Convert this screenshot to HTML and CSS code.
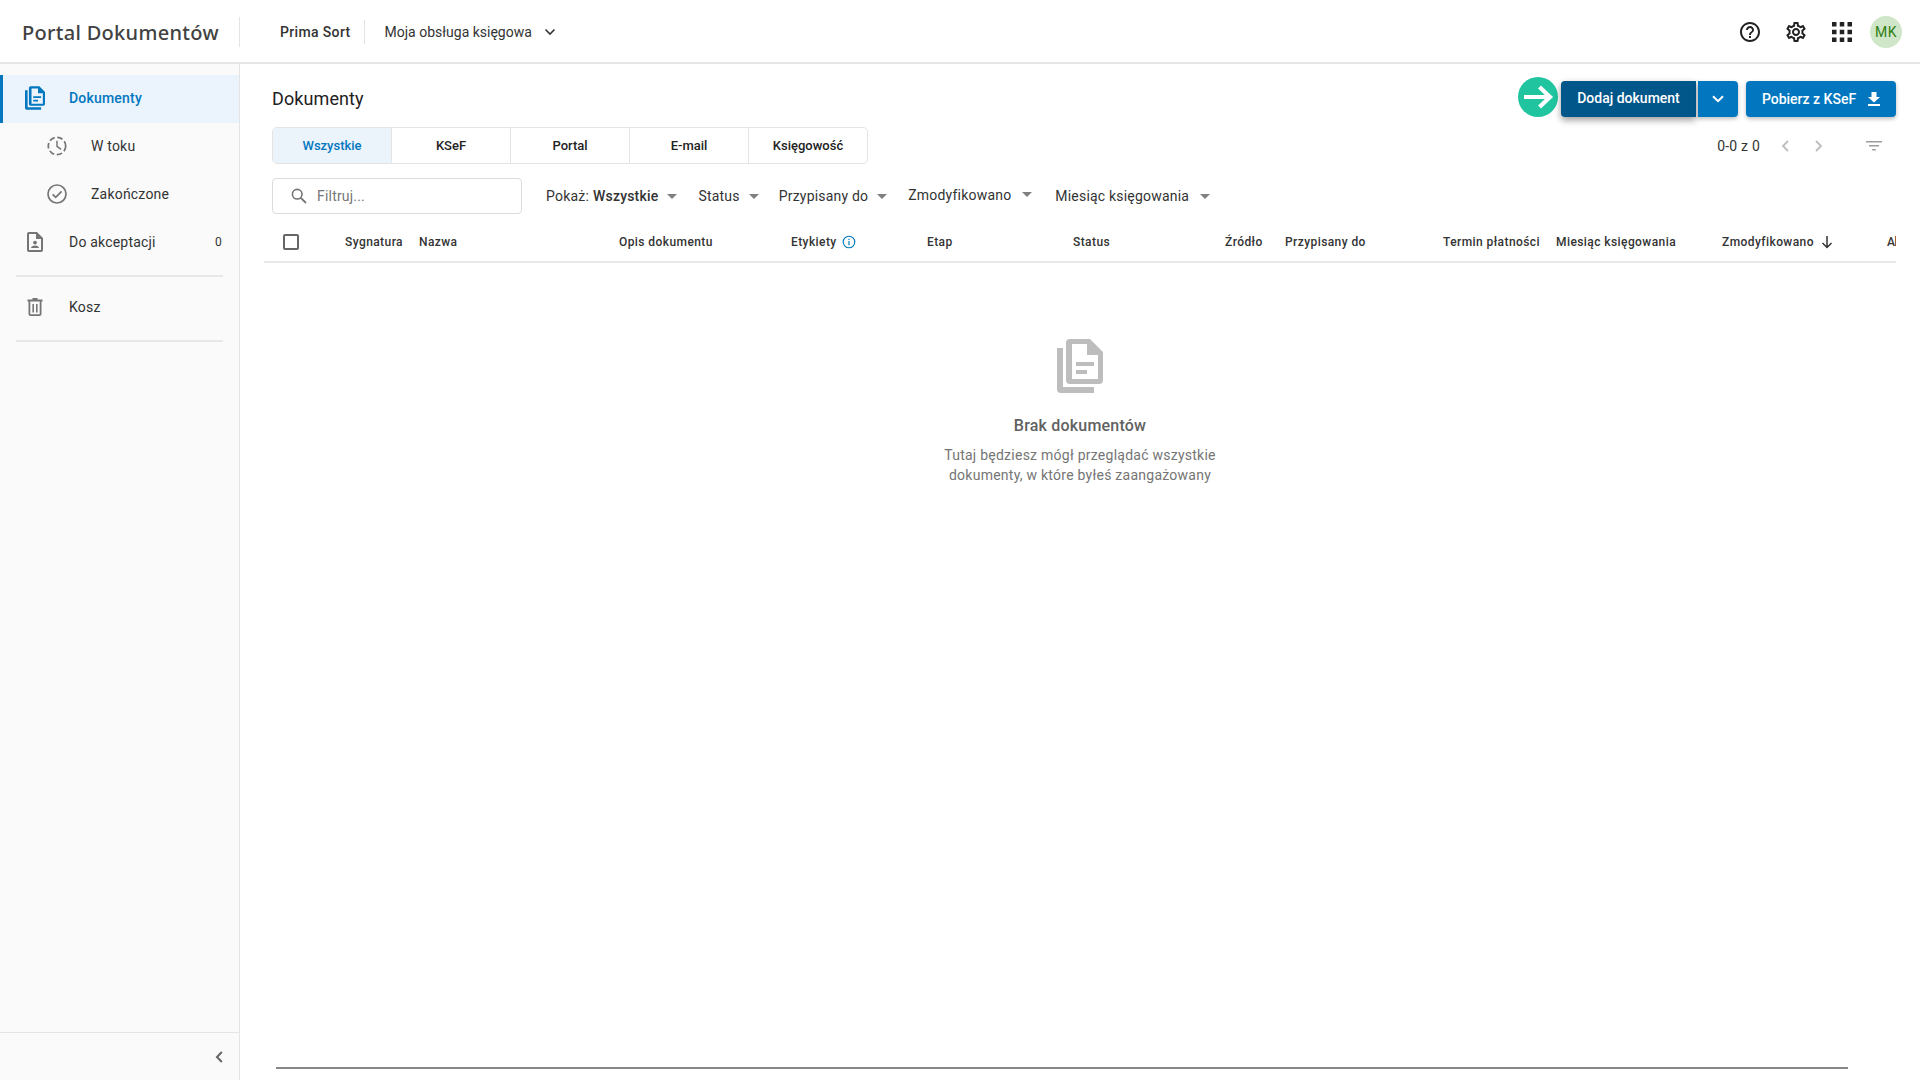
FILE: index.html
```html
<!DOCTYPE html>
<html lang="pl">
<head>
    <meta charset="UTF-8">
    <meta name="viewport" content="width=device-width, initial-scale=1.0">
    <title>Portal Dokumentów</title>
    <link rel="stylesheet" href="styles.css">
</head>
<body>
    <svg class="defs" width="0" height="0">
        <symbol id="doc-icon" viewBox="0 0 46 54">
            <path d="M0 9h6v39h31v6H4a4 4 0 0 1-4-4z"/>
            <path fill-rule="evenodd" d="M13 0h20l13 13v28a4 4 0 0 1-4 4H13a4 4 0 0 1-4-4V4a4 4 0 0 1 4-4zm2 5v35h26V16H30V5z"/>
            <path d="M19 23h18v4H19zM19 31h11v4H19z"/>
        </symbol>
    </svg>

    <header class="top-bar">
        <div class="logo">Portal Dokumentów</div>
        <div class="company">Prima Sort</div>
        <div class="service">
            Moja obsługa księgowa
            <svg class="service-chevron" viewBox="0 0 12 8"><path d="M1.5 1.5 6 6l4.5-4.5" fill="none" stroke="#333" stroke-width="1.6"/></svg>
        </div>
        <div class="top-icons">
            <svg class="top-icon" viewBox="0 0 24 24"><path d="M11 18h2v-2h-2v2zm1-16C6.48 2 2 6.48 2 12s4.48 10 10 10 10-4.48 10-10S17.52 2 12 2zm0 18c-4.41 0-8-3.59-8-8s3.59-8 8-8 8 3.59 8 8-3.59 8-8 8zm0-14c-2.21 0-4 1.79-4 4h2c0-1.1.9-2 2-2s2 .9 2 2c0 2-3 1.75-3 5h2c0-2.25 3-2.5 3-5 0-2.21-1.79-4-4-4z"/></svg>
            <svg class="top-icon" viewBox="0 0 24 24"><path d="M19.43 12.98c.04-.32.07-.64.07-.98 0-.34-.03-.66-.07-.98l2.11-1.65c.19-.15.24-.42.12-.64l-2-3.46c-.09-.16-.26-.25-.44-.25-.06 0-.12.01-.17.03l-2.49 1c-.52-.4-1.08-.73-1.69-.98l-.38-2.65C14.46 2.18 14.25 2 14 2h-4c-.25 0-.46.18-.49.42l-.38 2.65c-.61.25-1.17.59-1.69.98l-2.49-1c-.06-.02-.12-.03-.18-.03-.17 0-.34.09-.43.25l-2 3.46c-.13.22-.07.49.12.64l2.11 1.65c-.04.32-.07.65-.07.98 0 .33.03.66.07.98l-2.11 1.65c-.19.15-.24.42-.12.64l2 3.46c.09.16.26.25.44.25.06 0 .12-.01.17-.03l2.49-1c.52.4 1.08.73 1.69.98l.38 2.65c.03.24.24.42.49.42h4c.25 0 .46-.18.49-.42l.38-2.65c.61-.25 1.17-.59 1.69-.98l2.49 1c.06.02.12.03.18.03.17 0 .34-.09.43-.25l2-3.46c.12-.22.07-.49-.12-.64l-2.11-1.65zm-1.98-1.71c.04.31.05.52.05.73 0 .21-.02.43-.05.73l-.14 1.13.89.7 1.08.84-.7 1.21-1.27-.51-1.04-.42-.9.68c-.43.32-.84.56-1.25.73l-1.06.43-.16 1.13-.2 1.35h-1.4l-.19-1.35-.16-1.13-1.06-.43c-.43-.18-.83-.41-1.23-.71l-.91-.7-1.06.43-1.27.51-.7-1.21 1.08-.84.89-.7-.14-1.13c-.03-.31-.05-.54-.05-.74s.02-.43.05-.73l.14-1.13-.89-.7-1.08-.84.7-1.21 1.27.51 1.04.42.9-.68c.43-.32.84-.56 1.25-.73l1.06-.43.16-1.13.2-1.35h1.39l.19 1.35.16 1.13 1.06.43c.43.18.83.41 1.23.71l.91.7 1.06-.43 1.27-.51.7 1.21-1.07.85-.89.7.14 1.13zM12 8c-2.21 0-4 1.79-4 4s1.79 4 4 4 4-1.79 4-4-1.79-4-4-4zm0 6c-1.1 0-2-.9-2-2s.9-2 2-2 2 .9 2 2-.9 2-2 2z"/></svg>
            <svg class="top-icon" viewBox="0 0 24 24"><path d="M2 2h4.5v4.5H2zM9.75 2h4.5v4.5h-4.5zM17.5 2H22v4.5h-4.5zM2 9.75h4.5v4.5H2zM9.75 9.75h4.5v4.5h-4.5zM17.5 9.75H22v4.5h-4.5zM2 17.5h4.5V22H2zM9.75 17.5h4.5V22h-4.5zM17.5 17.5H22V22h-4.5z"/></svg>
            <div class="avatar">MK</div>
        </div>
    </header>

    <div class="layout">
        <aside class="sidebar">
            <nav class="side-nav">
                <a class="side-item active">
                    <svg class="side-icon doc"><use href="#doc-icon"/></svg>
                    Dokumenty
                </a>
                <a class="side-item sub">
                    <svg class="side-icon" viewBox="0 0 20 20"><circle cx="10" cy="10" r="8.7" fill="none" stroke="#757575" stroke-width="1.7" stroke-dasharray="5.6 2.6"/><path d="M10 4.8v5.6l4 3" fill="none" stroke="#757575" stroke-width="1.5"/></svg>
                    W toku
                </a>
                <a class="side-item sub">
                    <svg class="side-icon" viewBox="0 0 20 20"><circle cx="10" cy="10" r="9" fill="none" stroke="#757575" stroke-width="1.7"/><path d="m5.6 10.3 3.1 3.1 5.9-6" fill="none" stroke="#757575" stroke-width="1.7"/></svg>
                    Zakończone
                </a>
                <a class="side-item">
                    <svg class="side-icon narrow" viewBox="0 0 16 20"><path fill="#757575" fill-rule="evenodd" d="M2 0h8l6 6v12a2 2 0 0 1-2 2H2a2 2 0 0 1-2-2V2a2 2 0 0 1 2-2zm0 2v16h12V7H9V2z"/><circle cx="8" cy="10.6" r="1.9" fill="#757575"/><path fill="#757575" d="M4 16c0-1.7 2-2.6 4-2.6s4 .9 4 2.6z"/></svg>
                    Do akceptacji
                    <span class="side-count">0</span>
                </a>
                <div class="side-divider"></div>
                <a class="side-item trash">
                    <svg class="side-icon narrow" viewBox="0 0 16 18"><path fill="#757575" fill-rule="evenodd" d="M5.500 0h5v1.500h5v2H.5v-2h5zM1.500 3.500h13V16a2 2 0 0 1-2 2h-9a2 2 0 0 1-2-2zm1.800 2V16.200h9.400V3.500H3.300zM5.400 6h1.600v8.500H5.400zm3.600 0h1.600v8.500H9z"/></svg>
                    Kosz
                </a>
                <div class="side-divider"></div>
            </nav>
            <div class="side-footer">
                <svg class="collapse-icon" viewBox="0 0 8 12"><path d="M6.8 1 2 6l4.8 5" fill="none" stroke="#666" stroke-width="2"/></svg>
            </div>
        </aside>

        <main class="content">
            <div class="title-row">
                <h1 class="page-title">Dokumenty</h1>
                <div class="actions">
                    <div class="hint-arrow">
                        <svg viewBox="0 0 40 40"><path d="M6 20h26M21.500 10l10.500 10-10.500 10" fill="none" stroke="#fff" stroke-width="4.200"/></svg>
                    </div>
                    <button class="btn btn-main">Dodaj dokument</button>
                    <button class="btn btn-split">
                        <svg viewBox="0 0 12 8" width="12" height="8"><path d="M1 1.200 6 6.200l5-5" fill="none" stroke="#fff" stroke-width="2"/></svg>
                    </button>
                    <button class="btn btn-ksef">
                        Pobierz z KSeF
                        <svg viewBox="0 0 12 14" width="12" height="14"><path fill="#fff" d="M3.500 0h5v5H12L6 10.500 0 5h3.500zM0 12h12v2H0z"/></svg>
                    </button>
                </div>
            </div>

            <div class="tabs-row">
                <div class="tabs">
                    <div class="tab active">Wszystkie</div>
                    <div class="tab">KSeF</div>
                    <div class="tab">Portal</div>
                    <div class="tab">E-mail</div>
                    <div class="tab">Księgowość</div>
                </div>
                <div class="pager">
                    <span class="pager-text">0-0 z 0</span>
                    <svg class="pager-arrow" viewBox="0 0 8 12"><path d="M7 1 2 6l5 5" fill="none" stroke="#bdbdbd" stroke-width="1.800"/></svg>
                    <svg class="pager-arrow" viewBox="0 0 8 12"><path d="m1 1 5 5-5 5" fill="none" stroke="#bdbdbd" stroke-width="1.800"/></svg>
                    <svg class="list-filter" viewBox="0 0 16 10"><path fill="#9e9e9e" d="M0 0h16v1.500H0zM3 4h10v1.500H3zM6.200 8h3.600v1.500H6.200z"/></svg>
                </div>
            </div>

            <div class="filter-row">
                <div class="search">
                    <svg class="search-icon" viewBox="0 0 16 16"><circle cx="6.200" cy="6.200" r="4.800" fill="none" stroke="#757575" stroke-width="1.600"/><path d="m9.800 9.800 5.200 5.200" stroke="#757575" stroke-width="1.800"/></svg>
                    <span class="search-text">Filtruj...</span>
                </div>
                <div class="filter filter-show">Pokaż: <b>Wszystkie</b><i class="caret"></i></div>
                <div class="filter filter-status">Status<i class="caret"></i></div>
                <div class="filter filter-assigned">Przypisany do<i class="caret"></i></div>
                <div class="filter filter-modified">Zmodyfikowano<i class="caret"></i></div>
                <div class="filter filter-month">Miesiąc księgowania<i class="caret"></i></div>
            </div>

            <div class="table-head">
                <div class="head-check"><span class="checkbox"></span></div>
                <div>Sygnatura</div>
                <div>Nazwa</div>
                <div>Opis dokumentu</div>
                <div class="head-labels">Etykiety
                    <svg viewBox="0 0 14 14" width="14" height="14"><circle cx="7" cy="7" r="5.800" fill="none" stroke="#0277c0" stroke-width="1.100"/><path d="M6.400 6h1.200v4.300H6.400zM6.400 3.700h1.200V5H6.400z" fill="#0277c0"/></svg>
                </div>
                <div>Etap</div>
                <div>Status</div>
                <div>Źródło</div>
                <div>Przypisany do</div>
                <div>Termin płatności</div>
                <div>Miesiąc księgowania</div>
                <div class="head-sorted">Zmodyfikowano
                    <svg viewBox="0 0 12 14" width="12" height="14"><path d="M6 1v11.500M1.500 8 6 12.500 10.500 8" fill="none" stroke="#333" stroke-width="1.500"/></svg>
                </div>
                <div class="head-cut">Akcje</div>
            </div>

            <div class="empty">
                <svg class="empty-icon"><use href="#doc-icon"/></svg>
                <h2 class="empty-title">Brak dokumentów</h2>
                <p class="empty-text">Tutaj będziesz mógł przeglądać wszystkie<br>dokumenty, w które byłeś zaangażowany</p>
            </div>

            <div class="scroll-line"></div>
        </main>
    </div>
</body>
</html>
```

FILE: styles.css
```css
* {
    box-sizing: border-box;
}
html, body {
    height: 100%;
}
body {
    margin: 0;
    display: flex;
    flex-direction: column;
    overflow: hidden;
    background-color: white;
    color: #333;
    font-family: Roboto, "Liberation Sans", sans-serif;
    font-size: 14px;
    letter-spacing: 0.2px;
}
.defs {
    position: absolute;
}

/* top bar */
.top-bar {
    height: 64px;
    flex-shrink: 0;
    display: flex;
    align-items: center;
    border-bottom: 2px solid #e6e6e6;
    padding-top: 1px;
}
.logo {
    width: 240px;
    height: 30px;
    padding-left: 22px;
    border-right: 1px solid #e4e4e4;
    font-family: "Noto Sans", sans-serif;
    font-size: 20px;
    font-weight: 500;
    line-height: 31px;
    letter-spacing: 0.3px;
    color: #424242;
    white-space: nowrap;
}
.company {
    margin-left: 40px;
    padding-right: 13px;
    height: 24px;
    line-height: 24px;
    border-right: 1px solid #e4e4e4;
    font-weight: 500;
    letter-spacing: 0.35px;
}
.service {
    margin-left: 20px;
    display: flex;
    align-items: center;
    gap: 12px;
    letter-spacing: 0;
}
.service-chevron {
    width: 12px;
    height: 8px;
}
.top-icons {
    margin-left: auto;
    margin-right: 18px;
    display: flex;
    align-items: center;
    gap: 22px;
}
.top-icon {
    width: 24px;
    height: 24px;
    fill: #222;
}
.avatar {
    width: 32px;
    height: 32px;
    margin-left: -6px;
    border-radius: 50%;
    background-color: #cfe6c8;
    color: #2e7d12;
    display: flex;
    align-items: center;
    justify-content: center;
    letter-spacing: 0.5px;
}

.layout {
    flex: 1;
    display: flex;
    min-height: 0;
}

/* sidebar */
.sidebar {
    width: 240px;
    flex-shrink: 0;
    display: flex;
    flex-direction: column;
    background-color: #fafafa;
    border-right: 1px solid #e4e4e4;
}
.side-nav {
    flex: 1;
    padding-top: 11px;
}
.side-item {
    height: 48px;
    display: flex;
    align-items: center;
    padding-left: 27px;
    padding-bottom: 2px;
    color: #333;
}
.side-icon {
    width: 20px;
    height: 20px;
    margin-right: 22px;
    flex-shrink: 0;
}
.side-icon.narrow {
    width: 16px;
    margin-right: 26px;
}
.side-item.active {
    padding-left: 22px;
    border-left: 3px solid #0277c0;
    background-color: #ebf4fc;
    color: #0277c0;
    font-weight: 500;
}
.side-icon.doc {
    height: 24px;
    margin-right: 24px;
    fill: #0277c0;
}
.side-item.sub {
    padding-left: 47px;
    padding-right: 0;
}
.side-item.sub .side-icon {
    margin-right: 24px;
}
.side-count {
    margin-left: auto;
    margin-right: 17px;
    font-size: 12px;
}
.side-divider {
    height: 2px;
    margin: 8px 16px 0;
    background-color: #e8e8e8;
}
.side-item.trash {
    margin-top: 7px;
}
.side-footer {
    height: 48px;
    border-top: 1px solid #e4e4e4;
    display: flex;
    align-items: center;
    justify-content: flex-end;
    padding-right: 16px;
}
.collapse-icon {
    width: 8px;
    height: 12px;
}

/* main content */
.content {
    flex: 1;
    min-width: 0;
    padding: 13px 24px 11px 32px;
    display: flex;
    flex-direction: column;
}
.title-row {
    height: 40px;
    display: flex;
    align-items: center;
    justify-content: space-between;
}
.page-title {
    margin: 2px 0 0;
    font-size: 18px;
    font-weight: 400;
    letter-spacing: 0.1px;
    color: #212121;
}
.actions {
    display: flex;
    align-items: center;
    margin-top: 4px;
}
.hint-arrow {
    width: 40px;
    height: 40px;
    margin-top: -4px;
    margin-right: 3px;
    border-radius: 50%;
    background-color: #20c5a0;
}
.hint-arrow svg {
    display: block;
}
.btn {
    height: 36px;
    border: none;
    color: white;
    font-family: inherit;
    font-size: 14px;
    font-weight: 500;
    display: flex;
    align-items: center;
    justify-content: center;
    box-shadow: 0 2px 4px rgba(0, 0, 0, 0.25);
}
.btn-main {
    width: 135px;
    padding-bottom: 3px;
    background-color: #01568a;
    border-radius: 4px 0 0 4px;
    box-shadow: 0 3px 7px rgba(0, 0, 0, 0.4);
}
.btn-split {
    width: 40px;
    margin-left: 2px;
    background-color: #0277c0;
    border-radius: 0 4px 4px 0;
}
.btn-ksef {
    width: 150px;
    margin-left: 8px;
    gap: 12px;
    background-color: #0277c0;
    border-radius: 4px;
}
.tabs-row {
    margin-top: 10px;
    display: flex;
    justify-content: space-between;
    align-items: center;
}
.tabs {
    width: 596px;
    height: 37px;
    display: flex;
    border: 1px solid #e4e4e4;
    border-radius: 5px;
    overflow: hidden;
}
.tab {
    flex: 1;
    display: flex;
    align-items: center;
    justify-content: center;
    border-left: 1px solid #e4e4e4;
    font-size: 13px;
    font-weight: 500;
    letter-spacing: 0;
    color: #222;
}
.tab:first-child {
    border-left: none;
}
.tab.active {
    background-color: #ebf3fb;
    color: #0277c0;
}
.pager {
    display: flex;
    align-items: center;
}
.pager-text {
    color: #333;
    margin-right: 21px;
}
.pager-arrow {
    width: 8px;
    height: 12px;
    margin-right: 26px;
}
.list-filter {
    width: 16px;
    height: 10px;
    margin-left: 17px;
    margin-right: 14px;
}
.filter-row {
    margin-top: 14px;
    height: 36px;
    display: flex;
    align-items: center;
}
.search {
    width: 250px;
    height: 36px;
    margin-right: 24px;
    padding-left: 18px;
    display: flex;
    align-items: center;
    border: 1px solid #dcdcdc;
    border-radius: 4px;
}
.search-icon {
    width: 16px;
    height: 16px;
    margin-right: 10px;
}
.search-text {
    color: #757575;
}
.filter {
    display: flex;
    align-items: center;
    white-space: nowrap;
    color: #333;
}
.filter b {
    margin-left: 4px;
    font-weight: 500;
}
.filter-show {
    margin-right: 21px;
}
.filter-status {
    margin-right: 20px;
}
.filter-assigned {
    margin-right: 21px;
}
.filter-modified {
    margin-right: 23px;
    margin-bottom: 3px;
}
.caret {
    width: 0;
    height: 0;
    margin-left: 9px;
    border-left: 5px solid transparent;
    border-right: 5px solid transparent;
    border-top: 5px solid #808080;
}
.filter-modified .caret, .filter-month .caret {
    margin-left: 11px;
}

/* table header */
.table-head {
    margin: 8px 0 0 -8px;
    height: 41px;
    display: grid;
    grid-template-columns: 81px 74px 200px 172px 136px 146px 152px 60px 158px 113px 166px 165px 9px;
    align-items: center;
    border-bottom: 2px solid #e8e8e8;
    font-size: 12px;
    font-weight: 500;
    letter-spacing: 0.42px;
    color: #333;
    white-space: nowrap;
}
.head-check {
    padding-left: 19px;
    display: flex;
}
.checkbox {
    width: 16px;
    height: 16px;
    border: 2px solid #666;
    border-radius: 2px;
}
.head-labels, .head-sorted {
    display: flex;
    align-items: center;
    gap: 5px;
}
.head-sorted {
    gap: 7px;
}
.head-cut {
    overflow: hidden;
    letter-spacing: -0.5px;
}

/* empty state */
.empty {
    flex: 1;
    padding-top: 76px;
    padding-right: 8px;
    text-align: center;
}
.empty-icon {
    display: block;
    width: 46px;
    height: 54px;
    margin: 0 auto;
    fill: #bdbdbd;
}
.empty-title {
    margin: 23px 0 0;
    font-size: 16px;
    font-weight: 500;
    line-height: 20px;
    color: #616161;
}
.empty-text {
    margin: 9px 0 0;
    font-size: 14px;
    line-height: 20px;
    letter-spacing: 0.25px;
    color: #757575;
}
.scroll-line {
    height: 2px;
    margin: 0 48px 0 4px;
    background-color: #888;
}
```
